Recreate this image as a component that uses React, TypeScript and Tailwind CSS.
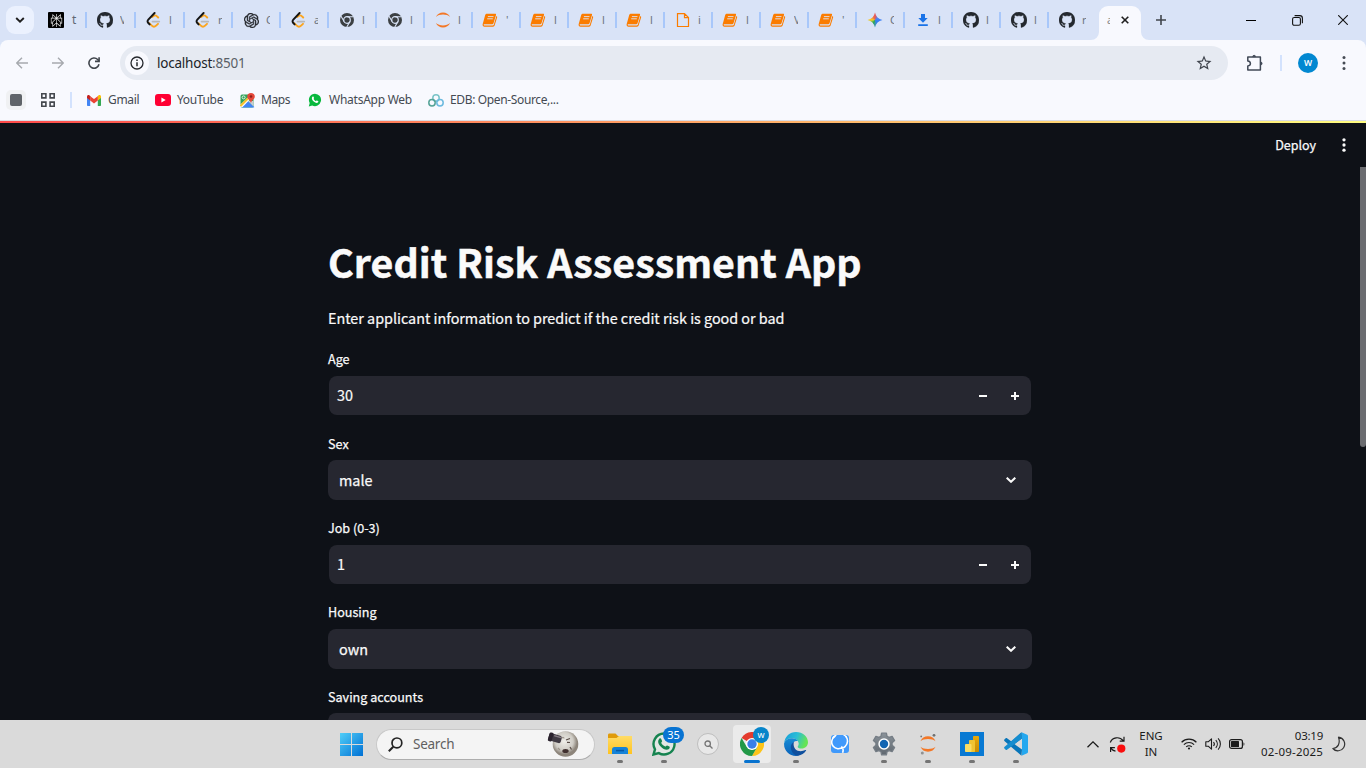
import React from "react";
import { SiOpenai, SiPerplexity } from "react-icons/si";
import { MdStarBorder } from "react-icons/md";

const ui = "font-['Noto_Sans','Open_Sans',sans-serif]";
const app = "font-['Noto_Sans_CJK_SC','Noto_Sans_CJK_JP',sans-serif]";

function GitHubMark() {
  return (
    <svg width="16" height="16" viewBox="0 0 16 16" fill="#24292f" stroke="#24292f" strokeWidth=".3">
      <path d="M8 0C3.58 0 0 3.58 0 8c0 3.54 2.29 6.53 5.47 7.59.4.07.55-.17.55-.38 0-.19-.01-.82-.01-1.49-2.01.37-2.53-.49-2.69-.94-.09-.23-.48-.94-.82-1.13-.28-.15-.68-.52-.01-.53.63-.01 1.08.58 1.23.82.72 1.21 1.87.87 2.33.66.07-.52.28-.87.51-1.07-1.78-.2-3.64-.89-3.64-3.95 0-.87.31-1.59.82-2.15-.08-.2-.36-1.02.08-2.12 0 0 .67-.21 2.2.82.64-.18 1.32-.27 2-.27.68 0 1.36.09 2 .27 1.53-1.04 2.2-.82 2.2-.82.44 1.1.16 1.92.08 2.12.51.56.82 1.27.82 2.15 0 3.07-1.87 3.75-3.65 3.95.29.25.54.73.54 1.48 0 1.07-.01 1.93-.01 2.2 0 .21.15.46.55.38A8.013 8.013 0 0016 8c0-4.42-3.58-8-8-8z" />
    </svg>
  );
}

function ChromeMono() {
  return (
    <svg width="16" height="16" viewBox="0 0 16 16" fill="none">
      <circle cx="8" cy="8" r="7" fill="#3c4043" />
      <circle cx="8" cy="8" r="3.3" stroke="#d9e3f7" strokeWidth="1.2" />
      <path d="M8 4.700h6.500M5.100 9.600 1.900 4M10.900 9.600 7.700 15.200" stroke="#d9e3f7" strokeWidth="1.1" />
    </svg>
  );
}

function LeetCode() {
  return (
    <svg width="16" height="16" viewBox="0 0 16 16" fill="none" strokeLinecap="round">
      <path d="M6.2 4.9 8 3.7c1-.6 2.1-.3 3 .6l1.2 1.2M3.5 11.3l2.3 2.4c1.2 1.2 3.1 1.2 4.3 0l1.9-1.9" stroke="#fba51f" strokeWidth="1.9" />
      <path d="M8.6 1 2.3 7.700c-.9 1-.9 2.300 0 3.300l1.300 1.400" stroke="#151515" strokeWidth="1.9" />
      <path d="M6.5 9.600h6.800" stroke="#b8b8b8" strokeWidth="1.7" />
    </svg>
  );
}

function Jupyter() {
  return (
    <svg width="16" height="16" viewBox="0 0 16 16" fill="#f37726">
      <path d="M.9 4.900C2.200 2.100 4.900.4 8 .4s5.800 1.700 7.100 4.500C13.300 3.300 10.800 2.500 8 2.500s-5.300.8-7.100 2.400z" />
      <path d="M.9 11.100C2.200 13.900 4.900 15.600 8 15.600s5.800-1.700 7.100-4.500C13.300 12.700 10.800 13.500 8 13.500s-5.300-.8-7.100-2.400z" />
    </svg>
  );
}

function Book() {
  return (
    <svg width="16" height="16" viewBox="0 0 16 16" className="-ml-[2px]">
      <path d="M5 1.800h8.200c.7 0 1 .5.8 1.100l-2.500 8.300c-.2.6-.7 1-1.400 1H2.600c-.8 0-1.100.4-.9.9.2.4.6.5 1.100.5h7.900c.5 0 .9-.3 1.100-.8L14.400 4c.7.3.9.8.7 1.400l-2.500 8.200c-.2.7-.8 1.100-1.500 1.100H2.500C1 14.700.2 13.300.7 12L3.200 3c.3-.8 1-1.200 1.800-1.200z" fill="#fb7c00" />
      <path d="M5.900 4.600h5.600M5.200 6.800h5.600" stroke="#dce5f8" strokeWidth=".9" />
    </svg>
  );
}

function FileIcon() {
  return (
    <svg width="16" height="16" viewBox="0 0 16 16" fill="none" stroke="#fb7c00" strokeWidth="1.2">
      <path d="M2.500 1.600h7l4 4v8.900h-11zM9.500 1.600v4h4" />
    </svg>
  );
}

function Gemini() {
  return (
    <span className="block size-4 bg-[conic-gradient(from_0deg,#ec5755,#4c85f4_55deg,#2f7df6_140deg,#3f91b8_175deg,#25a852_205deg,#71b84f_240deg,#f9cf2b_270deg,#ee7547_330deg,#ec5755)] [clip-path:path('M8_0.5C8.9_4.6_11.400_7.100_15.5_8C11.400_8.900_8.900_11.400_8_15.5C7.100_11.400_4.600_8.900_0.5_8C4.600_7.100_7.100_4.600_8_0.5Z')]" />
  );
}

function Download() {
  return (
    <svg width="16" height="16" viewBox="0 0 16 16" fill="#1a73e8">
      <path d="M6 2h4v4h2.700L8 10.800 3.300 6H6zM3.200 12.200h9.600V14H3.200z" />
    </svg>
  );
}

type Tab = { icon: string; text: string };
const tabs: Tab[] = [
  { icon: "perplexity", text: "t" },
  { icon: "github", text: "V" },
  { icon: "leet", text: "l" },
  { icon: "leet", text: "r" },
  { icon: "openai", text: "C" },
  { icon: "leet", text: "a" },
  { icon: "chrome", text: "l" },
  { icon: "chrome", text: "l" },
  { icon: "jupyter", text: "l" },
  { icon: "book", text: "'" },
  { icon: "book", text: "l" },
  { icon: "book", text: "l" },
  { icon: "book", text: "l" },
  { icon: "file", text: "i" },
  { icon: "book", text: "l" },
  { icon: "book", text: "V" },
  { icon: "book", text: "'" },
  { icon: "gemini", text: "C" },
  { icon: "download", text: "l" },
  { icon: "github", text: "l" },
  { icon: "github", text: "l" },
  { icon: "github", text: "r" },
];

function TabIcon({ name }: { name: string }) {
  switch (name) {
    case "perplexity":
      return <span className="grid size-4 place-items-center rounded-[1px] bg-black"><SiPerplexity size={13} color="#f3f3f3" /></span>;
    case "github":
      return <GitHubMark />;
    case "leet":
      return <LeetCode />;
    case "openai":
      return <SiOpenai size={15} color="#25282d" stroke="#25282d" strokeWidth={0.6} />;
    case "chrome":
      return <ChromeMono />;
    case "jupyter":
      return <Jupyter />;
    case "file":
      return <FileIcon />;
    case "gemini":
      return <Gemini />;
    case "download":
      return <Download />;
    default:
      return <Book />;
  }
}

function TabStrip() {
  return (
    <div className="flex h-10 bg-[#d9e3f7]">
      <div className="flex w-[36px] shrink-0 items-center pl-[6px]">
        <div className="grid h-7 w-7 shrink-0 place-items-center rounded-[9px] bg-[#ebf1fe]">
          <svg width="10" height="6" viewBox="0 0 10 6" fill="none" stroke="#1f1f1f" strokeWidth="1.9"><path d="M1.200 1 5 4.600 8.800 1" /></svg>
        </div>
      </div>
      {tabs.map((t, i) => (
        <div key={i} className={i < 3 ? "flex w-[49px] shrink-0 items-center" : "flex w-[48px] shrink-0 items-center"}>
          <span className={i === 0 ? "h-4 w-[2px]" : "h-4 w-[2px] bg-[#a8c7fa]"} />
          <span className="ml-[10px] grid size-4 place-items-center"><TabIcon name={t.icon} /></span>
          <span className={i === 0
            ? `${ui} ml-[8px] whitespace-nowrap text-[12px] leading-4 text-[#5f6774]`
            : `${ui} ml-[7px] w-[4px] overflow-hidden whitespace-nowrap text-[11px] leading-4 text-[#6b7380]`}>{t.text}</span>
        </div>
      ))}
      <div className="flex w-[70px] shrink-0 items-end">
        <svg width="8" height="8" viewBox="0 0 8 8" className="-ml-[4px] shrink-0"><path d="M8 0v8H0a8 8 0 0 0 8-8z" fill="#f8f9fe" /></svg>
        <div className="flex h-[34px] w-[42px] shrink-0 items-center rounded-t-[9px] bg-[#f8f9fe] pb-[6px] pl-[8px]">
          <span className={`${ui} w-[3px] overflow-hidden text-[11px] leading-4 text-[#888]`}>a</span>
          <svg width="8" height="8" viewBox="0 0 8 8" stroke="#1f1f1f" strokeWidth="1.6" className="ml-[11px]"><path d="m.7.7 6.600 6.600M7.300.7.7 7.300" /></svg>
        </div>
        <svg width="8" height="8" viewBox="0 0 8 8" className="shrink-0"><path d="M0 0v8h8a8 8 0 0 1-8-8z" fill="#f8f9fe" /></svg>
      </div>
      <div className="flex flex-1 items-center">
        <svg width="10" height="10" viewBox="0 0 10 10" stroke="#40454c" strokeWidth="1.6" className="-ml-[9px]"><path d="M5 0v10M0 5h10" /></svg>
        <div className="ml-auto flex items-center pr-[18px]">
          <span className="h-[1px] w-[10px] bg-black" />
          <svg width="11" height="11" viewBox="0 0 11 11" fill="none" stroke="#111" strokeWidth="1.1" className="ml-[36px]"><rect x=".6" y="2.5" width="7.8" height="7.8" rx="1.6" /><path d="M2.600.6h5.200c1.500 0 2.600 1.100 2.600 2.600v5" /></svg>
          <svg width="10" height="10" viewBox="0 0 10 10" stroke="#111" strokeWidth="1.1" className="ml-[35px]"><path d="m.2.2 9.600 9.600M9.800.2.2 9.800" /></svg>
        </div>
      </div>
    </div>
  );
}

function Arrow({ right = false }: { right?: boolean }) {
  return (
    <svg width="12" height="12" viewBox="0 0 12 12" fill="none" stroke="#a6a9ae" strokeWidth="1.4">
      <path d={right ? "M0 6h11M6 .7 11.300 6 6 11.300" : "M12 6H1M6 .7.7 6 6 11.300"} />
    </svg>
  );
}

function Toolbar() {
  return (
    <div className="bg-[#d9e3f7]">
      <div className="flex h-[46px] items-center rounded-t-[8px] bg-[#f8f9fe] pl-4">
        <Arrow />
        <span className="ml-6"><Arrow right /></span>
        <svg width="12" height="12" viewBox="0 0 12 12" fill="none" stroke="#40454c" strokeWidth="1.6" className="ml-6">
          <path d="M11 7.300A5.100 5.100 0 1 1 9.700 2.500L11 3.900" /><path d="M11.100.2v4.200H7" />
        </svg>
        <div className="ml-[20px] flex h-[34px] w-[1108px] items-center rounded-full bg-[#e6eaf2] pl-[5px]">
          <span className="grid size-6 place-items-center rounded-full bg-[#f8f9fe]">
            <svg width="14" height="14" viewBox="0 0 14 14" fill="none" stroke="#25282d" strokeWidth="1.3"><circle cx="7" cy="7" r="6" /><path d="M7 6.300v4M7 3.400v1.500" strokeWidth="1.5" /></svg>
          </span>
          <span className={`${ui} ml-2 text-[13.5px] leading-5 tracking-[-0.22px] text-[#202328]`}>localhost<span className="text-[#5a5f67]">:8501</span></span>
          <MdStarBorder size={18} color="#3f444d" className="ml-auto mr-[15px]" />
        </div>
        <svg width="18" height="18" viewBox="0 0 18 18" fill="none" stroke="#414957" strokeWidth="1.5" className="ml-[18px]">
          <path d="M1.800 3h12.600v12.900H1.800v-4c1.800-.2 2.600-1.200 2.600-2.400S3.600 7.200 1.800 7z" strokeLinejoin="round" /><path d="M6.700 2.700a1.400 1.400 0 0 1 2.800 0zM14.700 8.100a1.400 1.400 0 0 1 0 2.800z" fill="#414957" strokeWidth=".8" />
        </svg>
        <span className="ml-[16px] h-4 w-[2px] bg-[#d3e2fd]" />
        <span className={`${ui} ml-4 grid size-5 place-items-center rounded-full bg-[#0288d1] text-[8.5px] font-semibold leading-3 text-white`}>W</span>
        <svg width="4" height="14" viewBox="0 0 4 14" fill="#454b54" className="ml-6"><circle cx="2" cy="1.6" r="1.5" /><circle cx="2" cy="7" r="1.5" /><circle cx="2" cy="12.4" r="1.5" /></svg>
      </div>
    </div>
  );
}

function Bookmarks() {
  const label = `${ui} text-[12px] leading-4 text-[#444a52] whitespace-nowrap`;
  return (
    <div className="flex h-[34px] items-center bg-[#f8f9fe] pl-[6px] pb-[6px]">
      <span className="grid size-5 place-items-center rounded-[5px] bg-[#f0f1f3]"><span className="size-3 rounded-[2px] bg-[#5f6368]" /></span>
      <svg width="14" height="14" viewBox="0 0 14 14" fill="none" stroke="#44484e" strokeWidth="1.6" className="ml-[15px]"><path d="M.8.8h4.100v4.100H.8zM9.100.8h4.100v4.100H9.100zM.8 9.100h4.100v4.100H.8zM9.100 9.100h4.100v4.100H9.100z" /></svg>
      <span className="ml-[15px] h-4 w-[2px] bg-[#d3e2fd]" />
      <svg width="14" height="11" viewBox="0 0 14 11" className="ml-[15px]"><path d="M0 2v8.200c0 .5.3.8.8.8h2.400V4.900z" fill="#4285f4" /><path d="M10.800 11h2.400c.5 0 .8-.3.8-.8V2l-3.200 2.900z" fill="#34a853" /><path d="M10.800 1.200v4.300L14 3.100V1.700c0-1.400-1.500-2.100-2.600-1.200z" fill="#fbbc04" /><path d="M3.200 5.500V1.200L7 4.100l3.800-2.900v4.300L7 8.400z" fill="#ea4335" /><path d="M0 1.700v1.400l3.200 2.400V1.200L2.600.5C1.500-.4 0 .3 0 1.700z" fill="#c5221f" /></svg>
      <span className={`${label} ml-[7px] w-[47px] tracking-[-0.35px]`}>Gmail</span>
      <svg width="16" height="12" viewBox="0 0 16 12"><rect width="16" height="12" rx="3" fill="#ff0033" /><path d="M6.400 3.400v5.200L10.700 6z" fill="#fff" /></svg>
      <span className={`${label} ml-[6px] w-[63px] tracking-[-0.35px]`}>YouTube</span>
      <svg width="15" height="15" viewBox="0 0 15 15"><rect x=".5" y="1.5" width="13" height="13" rx="1.5" fill="#34a35a" /><path d="m1 13.500 6.500-6.200 6.800 6.600c-.2.4-.5.6-1 .6H2c-.5 0-.9-.4-1-1z" fill="#4285f4" /><path d="M0 12 10.500 2l2 2L2.300 14.300C1 14.800.2 13.400 0 12z" fill="#fff" /><path d="M.5 13 8 5.500" stroke="#fbc22a" strokeWidth="2" /><path d="m8 8 5.500 5.500V8z" fill="#c9cdd2" /><circle cx="3.600" cy="4.400" r="1.500" fill="none" stroke="#fff" strokeWidth=".8" /><path d="M11 0c2.300 0 3.800 1.500 3.800 3.500 0 2.700-3 3.300-3.800 6.500-.8-3.200-3.800-3.800-3.800-6.500C7.200 1.500 8.700 0 11 0z" fill="#e5483a" /><circle cx="11" cy="3.500" r="1.300" fill="#8e211b" /></svg>
      <span className={`${label} ml-[6px] w-[47px] tracking-[-0.45px]`}>Maps</span>
      <svg width="14" height="14" viewBox="0 0 14 14"><path d="M7 .7A6.200 6.200 0 0 0 1.700 10L.8 13.400l3.400-.9A6.200 6.200 0 1 0 7 .7z" fill="#08b83e" /><path d="M4.400 3.800c.5-.5 1-.4 1.200.1l.5 1.200c0 .3-.6.8-.5 1 .5 1 1.200 1.600 2.200 2.100.3 0 .7-.8 1-.7l1.300.6c.4.2.3 1-.2 1.400-1.200.9-3.300.1-4.700-1.400C3.800 6.700 3.400 5 4.400 3.800z" fill="#fff" /></svg>
      <span className={`${label} ml-[7px] w-[99px] tracking-[-0.25px]`}>WhatsApp Web</span>
      <svg width="16" height="13" viewBox="0 0 16 13" fill="none" strokeWidth="1.5"><circle cx="8" cy="4" r="3.2" stroke="#79c3c7" /><circle cx="4" cy="8.700" r="3.200" stroke="#55a397" /><circle cx="12" cy="8.700" r="3.200" stroke="#6cbadf" /></svg>
      <span className={`${label} ml-[6px] tracking-[-0.36px]`}>EDB: Open-Source,...</span>
    </div>
  );
}

type Field = { label: string; value: string; kind: "number" | "select"; row: string; head: string };
const fields: Field[] = [
  { label: "Age", value: "30", kind: "number", row: "h-[84px]", head: "" },
  { label: "Sex", value: "male", kind: "select", row: "h-[85px]", head: "pt-px" },
  { label: "Job (0-3)", value: "1", kind: "number", row: "h-[84px]", head: "" },
  { label: "Housing", value: "own", kind: "select", row: "h-[84px]", head: "" },
  { label: "Saving accounts", value: "", kind: "select", row: "h-[84px]", head: "pt-px" },
];

function FormField({ f }: { f: Field }) {
  return (
    <div className={`${f.row} shrink-0`}>
      <div className={`${f.head} flex h-[28px] items-start text-[12.6px] leading-[22px] [-webkit-text-stroke:0.25px_#fafafa]`}>{f.label}</div>
      {f.kind === "number" ? (
        <div className="mx-[1px] flex h-[39px] items-center rounded-[8px] bg-[#262730] pl-2">
          <span className="pb-px text-[14.4px] leading-6 [-webkit-text-stroke:0.2px_#fafafa]">{f.value}</span>
          <span className="ml-auto mr-[24px] h-[2px] w-[8px] bg-[#fafafa]" />
          <svg width="8" height="8" viewBox="0 0 8 8" stroke="#fafafa" strokeWidth="2" className="mr-[12px]"><path d="M4 0v8M0 4h8" /></svg>
        </div>
      ) : (
        <div className="flex h-10 items-center rounded-[8px] bg-[#262730] pl-[11px]">
          <span className="text-[14.4px] leading-6 [-webkit-text-stroke:0.25px_#fafafa]">{f.value}</span>
          <svg width="10" height="6" viewBox="0 0 10 6" fill="none" stroke="#fafafa" strokeWidth="2" className="ml-auto mr-[16px]"><path d="M.7.7 5 4.800 9.300.7" /></svg>
        </div>
      )}
    </div>
  );
}

function StreamlitPage() {
  return (
    <main className={`${app} flex h-[597px] overflow-hidden bg-[#0e1117] text-[#fafafa]`}>
      <div className="flex flex-1 flex-col">
        <header className="flex h-[44px] shrink-0 items-center justify-end pr-[14px]">
          <span className="text-[12.5px] leading-5 [-webkit-text-stroke:0.25px_#fafafa]">Deploy</span>
          <svg width="4" height="14" viewBox="0 0 4 14" fill="#fafafa" className="ml-[26px]"><circle cx="2" cy="1.8" r="1.65" /><circle cx="2" cy="7" r="1.65" /><circle cx="2" cy="12.2" r="1.65" /></svg>
        </header>
        <div className="ml-[328px] flex w-[704px] flex-col pt-[67px]">
          <h1 className="h-[54px] whitespace-nowrap text-[39.3px] font-bold leading-[54px] tracking-[0.04px] [-webkit-text-stroke:0.5px_#fafafa]">Credit Risk Assessment App</h1>
          <p className="mb-[20px] mt-[19px] h-[21px] whitespace-nowrap text-[14.4px] leading-[21px] tracking-[-0.03px] [-webkit-text-stroke:0.2px_#fafafa]">Enter applicant information to predict if the credit risk is good or bad</p>
          {fields.map((f) => <FormField key={f.label} f={f} />)}
        </div>
      </div>
      <div className="w-[6px] pt-[44px]"><div className="h-[280px] rounded-b-[3px] bg-[#6b6c70]" /></div>
    </main>
  );
}

function ExplorerIcon() {
  return (
    <svg width="24" height="24" viewBox="0 0 24 24"><defs><linearGradient id="fold" x2="0" y2="1"><stop stopColor="#ffdc67" /><stop offset="1" stopColor="#ffc31f" /></linearGradient></defs><path d="M0 3c0-1 .5-1.600 1.500-1.600h6L10 4h12.500c1 0 1.500.6 1.500 1.500V12H0z" fill="#e09b0b" /><path d="M0 6h8.500L11 4h13v18H0z" fill="url(#fold)" /><path d="M4 22v-4.500c0-1.600.9-2.500 2.500-2.500h11c1.600 0 2.500.9 2.500 2.500V22z" fill="#1683d8" /><path d="M8 18.600h8" stroke="#0658a6" strokeWidth="1.5" /></svg>
  );
}
function WhatsAppIcon() {
  return (
    <svg width="24" height="24" viewBox="0 0 24 24"><path d="M12 1.500A10.500 10.500 0 0 0 3 17.300L1.500 22.500l5.300-1.400A10.500 10.500 0 1 0 12 1.500z" fill="#e2e7e4" stroke="#15834f" strokeWidth="2.4" /><path d="M7.300 6.700c.7-.7 1.500-.6 1.900.2l.9 2.200c.2.6-1 1.500-.8 1.900.9 1.700 2 2.700 3.900 3.500.5.2 1.300-1.300 1.900-1.100l2.300 1.100c.6.4.4 1.700-.4 2.400-2.200 1.800-5.600.4-8.100-2.200-2.600-2.500-3.700-5.700-1.600-8z" fill="#15834f" /></svg>
  );
}
function ChromeColor() {
  return (
    <svg width="24" height="24" viewBox="0 0 24 24"><path d="M12 12 1.600 6A12 12 0 0 1 22.400 6H12z" fill="#e33b2e" /><path d="M12 12V6h10.400A12 12 0 0 1 12 24l5.200-9z" fill="#fcc419" /><path d="M1.600 6 6.800 15 12 18l5.200-3L12 24A12 12 0 0 1 1.600 6z" fill="#229847" /><circle cx="12" cy="12" r="6" fill="#fff" /><circle cx="12" cy="12" r="4.700" fill="#397fe8" /></svg>
  );
}
function EdgeIcon() {
  return (
    <svg width="24" height="24" viewBox="0 0 24 24"><defs><linearGradient id="ea" x2="1" y2=".3"><stop stopColor="#159bd9" /><stop offset=".55" stopColor="#29bdd7" /><stop offset="1" stopColor="#65e455" /></linearGradient><linearGradient id="eb" x2="0" y2="1"><stop stopColor="#168cd6" /><stop offset="1" stopColor="#0a61b8" /></linearGradient></defs><path d="M.2 11C.8 4.500 5.800 0 12 0c6.800 0 12 4.700 12 10.200 0 3.800-2.900 6.300-6.300 6.300-2.700 0-4-.9-4-1.800 0-.8 1-1.200 1-3 0-2.800-2.700-5.500-6.800-5.500C4.200 6.200 1.200 8 .2 11z" fill="url(#ea)" /><path d="M.1 11.200C1.300 8 4.300 6.200 7.900 6.200c2.800 0 5 1.200 6.100 2.900-3.200-.9-5.700 1.400-5.700 4.700 0 4.600 4 8.300 8.700 8.300-1.500 1.200-3.200 1.800-5 1.800C5 23.900-.5 18.300.1 11.200z" fill="url(#eb)" /><path d="M9.800 9.900c-2 1.100-3 3-3 5.400 0 4.100 3.400 8.500 7.300 8.400 3.300-.4 6.300-2.500 8-5.200.3-.5-.1-.8-.6-.5-6 3-13.200.1-11.700-8.100z" fill="#0f4f9d" /></svg>
  );
}
function SwirlIcon() {
  return (
    <svg width="18" height="18" viewBox="0 0 18 18" fill="none"><rect width="18" height="18" rx="3" fill="#4099fb" /><path d="M4.500.8C.5 3.500-.5 8 2.200 11.300c2.300 2.800 6.500 3.300 9.600.8M14.300.8c3 3.200 3 8-.3 10.800-1 .9-2 1.400-3.200 1.600M10.300 11.500c1.800 1.300 2.200 3.800 1.300 6.300" stroke="#fff" strokeWidth="1.6" /><path d="M1.500 2.800C2.600 1.300 4 .5 5.600 0M12.500 0c1.300.5 2.300 1.200 3.200 2.200" stroke="#fff" strokeWidth="1.1" /></svg>
  );
}
function GearIcon() {
  return (
    <svg width="24" height="24" viewBox="0 0 24 24"><defs><linearGradient id="gr" x2="0" y2="1"><stop stopColor="#8a9299" /><stop offset="1" stopColor="#606870" /></linearGradient></defs><path d="M9.600 1.200h4.800l.7 3.100 2 1.100 3-1.100 2.500 4.200-2.500 2.200v2.600l2.500 2.200-2.500 4.200-3-1.100-2 1.100-.7 3.100H9.600l-.7-3.100-2-1.100-3 1.100-2.500-4.200 2.500-2.200v-2.600L1.400 8.500l2.500-4.200 3 1.100 2-1.100z" fill="url(#gr)" stroke="#757d85" strokeWidth="1.3" strokeLinejoin="round" /><circle cx="12" cy="12" r="5.700" fill="#fff" /><circle cx="12" cy="12" r="4.200" fill="#1265b2" /></svg>
  );
}
function JupyterTask() {
  return (
    <svg width="18" height="22" viewBox="0 0 18 22"><path d="M1.500 8.200C2.800 5 5.500 3.300 9 3.300s6.200 1.700 7.500 4.900C14.900 6.700 12.100 6 9 6s-5.900.7-7.500 2.200zM1.500 13.800C2.800 17 5.500 18.700 9 18.700s6.200-1.700 7.500-4.900C14.900 15.300 12.100 16 9 16s-5.900-.7-7.500-2.200z" fill="#f37726" /><circle cx="15" cy="2.300" r="1.400" fill="#6f7070" /><circle cx="2.200" cy="3.400" r=".9" fill="#777" /><circle cx="3.300" cy="20" r="1.500" fill="#929292" /></svg>
  );
}
function PowerBI() {
  return (
    <svg width="24" height="24" viewBox="0 0 24 24"><defs><linearGradient id="pb" x2="0" y2="1"><stop stopColor="#e8a90b" /><stop offset="1" stopColor="#c58b06" /></linearGradient></defs><path d="M0 0h24v24H0z" fill="#0879d3" /><rect x="13" y="4" width="6" height="16" rx=".8" fill="url(#pb)" /><rect x="9" y="8" width="6" height="12" rx=".8" fill="#efc332" /><rect x="5" y="12" width="6.500" height="8" rx=".8" fill="#f9dc65" /></svg>
  );
}
function VsCode() {
  return (
    <svg width="24" height="24" viewBox="0 0 24 24"><path d="M17.500.2 7.400 9.500 3 6.200c-.4-.3-.9-.3-1.300 0L.4 7.500c-.4.4-.4 1 0 1.400L17.500 23.800l.5-6.200-7.600-5.600L18 6.500z" fill="#0875b9" /><path d="m7.400 14.500-4.400 3.300c-.4.3-.9.3-1.300 0L.4 16.500c-.4-.4-.4-1 0-1.400L17.500.2l.5 6.300z" fill="#168dcf" /><path d="m17.500.2 5.700 2.600c.5.3.8.7.8 1.300v15.800c0 .6-.3 1-.8 1.300l-5.700 2.600c.3-.2.5-.6.5-1V1.200c0-.5-.2-.9-.5-1z" fill="#25a8ef" /></svg>
  );
}

function TaskItem({ children, running = false, active = false }: { children: React.ReactNode; running?: boolean; active?: boolean }) {
  return (
    <div className="flex h-12 w-11 items-center justify-center">
      <div className={active ? "relative grid h-[38px] w-[38px] place-items-center rounded-[4px] bg-[#ebebeb]" : "relative grid h-[38px] w-[38px] place-items-center"}>
        {children}
        {active && <span className="absolute bottom-0 left-[11px] h-[3px] w-4 rounded-full bg-[#0873cf]" />}
        {running && <span className="absolute bottom-0 left-[16px] h-[3px] w-[6px] rounded-full bg-[#747474]" />}
      </div>
    </div>
  );
}

function Moon() {
  return (
    <svg width="32" height="28" viewBox="0 0 32 28"><defs><radialGradient id="mn" cx=".45" cy=".4"><stop stopColor="#efeee9" /><stop offset=".7" stopColor="#cfccc5" /><stop offset="1" stopColor="#8d857b" /></radialGradient></defs><circle cx="18.500" cy="14" r="12.800" fill="url(#mn)" /><g transform="rotate(16 8 10)"><rect x="1" y="4.500" width="13" height="7.500" rx="2" fill="#403a43" /><rect x="1" y="3.800" width="4" height="9" rx="1.300" fill="#2a222d" /><path d="M6 6h7" stroke="#8a8088" strokeWidth="1.3" /></g><path d="m19 10 4-1.500M20 12.300l3 .2M23 17l1.500 2.500" stroke="#594d48" strokeWidth="1.2" /><ellipse cx="18.500" cy="21" rx="3.200" ry="2" fill="#40302f" /><path d="M15 8c1-1 2-.5 2 .5M11 18l2 2" stroke="#9c948b" strokeWidth="1.2" fill="none" /></svg>
  );
}

function Taskbar() {
  return (
    <div className={`${ui} flex h-12 items-center bg-[#dadada] text-[#1b1b1b]`}>
      <svg width="23" height="23" viewBox="0 0 23 23" className="ml-[340px]"><defs><linearGradient id="win" gradientUnits="userSpaceOnUse" x2="23" y2="23"><stop stopColor="#50cef8" /><stop offset="1" stopColor="#0070d4" /></linearGradient></defs><path d="M0 0h11v11H0zM12 0h11v11H12zM0 12h11v11H0zM12 12h11v11H12z" fill="url(#win)" /></svg>
      <div className="ml-[13px] flex h-[31px] w-[219px] items-center rounded-full border border-[#c8c8c8] border-b-[#adadad] bg-[#f4f4f4] pl-[11px]">
        <svg width="15" height="15" viewBox="0 0 15 15" fill="none" stroke="#242424" strokeWidth="1.7"><circle cx="8.900" cy="5.900" r="4.900" /><path d="M5.300 9.700.8 14.200" strokeWidth="2" /></svg>
        <span className="ml-[10px] text-[13.5px] leading-5 tracking-[-0.25px] text-[#606060]">Search</span>
        <span className="ml-auto mr-[15px]"><Moon /></span>
      </div>
      <div className="ml-[3px] flex">
        <TaskItem running><ExplorerIcon /></TaskItem>
        <TaskItem running>
          <WhatsAppIcon />
          <span className="absolute left-[18px] top-[2px] grid h-4 w-[21px] place-items-center rounded-full bg-[#0873d2] text-[11px] leading-4 text-white">35</span>
        </TaskItem>
        <TaskItem>
          <span className="grid size-[22px] place-items-center rounded-full border border-[#bebebe] bg-[#e8e8e8]"><svg width="9" height="9" viewBox="0 0 9 9" fill="none" stroke="#767676" strokeWidth="1.3"><circle cx="3.700" cy="3.700" r="2.700" /><path d="m5.700 5.700 2.800 2.800" /></svg></span>
        </TaskItem>
        <TaskItem active>
          <ChromeColor />
          <span className="absolute left-[20px] top-[2px] grid size-4 place-items-center rounded-full bg-[#0785ca] text-[9px] leading-3 text-white">w</span>
        </TaskItem>
        <TaskItem running><EdgeIcon /></TaskItem>
        <TaskItem><SwirlIcon /></TaskItem>
        <TaskItem running><GearIcon /></TaskItem>
        <TaskItem running><JupyterTask /></TaskItem>
        <TaskItem running><PowerBI /></TaskItem>
        <TaskItem running><VsCode /></TaskItem>
      </div>
      <div className="ml-auto flex items-center pr-[20px]">
        <svg width="12" height="7" viewBox="0 0 12 7" fill="none" stroke="#1b1b1b" strokeWidth="1.3"><path d="M.5 6.300 6 .9l5.500 5.400" /></svg>
        <svg width="17" height="17" viewBox="0 0 17 17" fill="none" stroke="#1b1b1b" strokeWidth="1.2" className="ml-[10px]"><path d="M1.300 6.500C3.300 1 10.500.2 14.200 4.700M15 .8v4.300h-4.300M1.600 16v-4.300h4.300M1.800 12.200c1.100 1.600 2.700 2.700 4.700 3" /><circle cx="12.300" cy="12.600" r="4.100" fill="#fa0d0d" stroke="none" /></svg>
        <span className="ml-[10px] w-[30px] text-center text-[11.5px] leading-4">ENG<br />IN</span>
        <svg width="16" height="12" viewBox="0 0 16 12" fill="none" stroke="#1b1b1b" strokeWidth="1.2" className="ml-[15px]"><path d="M.6 4.200a10.500 10.500 0 0 1 14.800 0M2.900 6.600a7.200 7.200 0 0 1 10.200 0M5.200 8.900a4 4 0 0 1 5.600 0" /><circle cx="8" cy="10.500" r="1.100" fill="#1b1b1b" stroke="none" /></svg>
        <svg width="17" height="14" viewBox="0 0 17 14" fill="none" stroke="#1b1b1b" strokeWidth="1.1" className="ml-[8px]"><path d="M.8 4.800v4.400h2.400l3.300 3V1.800l-3.300 3zM8.500 5a3 3 0 0 1 0 4M10.800 3.200a5.600 5.600 0 0 1 0 7.600M13.100 1.400a8 8 0 0 1 0 11.200" strokeLinejoin="round" /></svg>
        <svg width="16" height="10" viewBox="0 0 16 10" className="ml-[7px]"><rect x=".6" y=".6" width="12.800" height="8.800" rx="2" fill="none" stroke="#1b1b1b" strokeWidth="1.2" /><rect x="2" y="2" width="8" height="6" rx=".6" fill="#1b1b1b" /><path d="M14.500 3.200c1.200.5 1.200 3.100 0 3.600z" fill="#1b1b1b" /></svg>
        <span className="ml-[11px] w-[67px] whitespace-nowrap text-right text-[11.5px] leading-4"><span className="tracking-[-0.25px]">03:19</span><br /><span className="tracking-[0.2px]">02-09-2025</span></span>
        <svg width="14" height="16" viewBox="0 0 14 16" fill="none" stroke="#333" strokeWidth="1.2" className="ml-[9px]"><path d="M6.500 1.200c5.100.7 7.800 6.200 5.100 10.500-2.300 3.700-7.800 4.200-10.700.8 4.900-.5 7.700-4.800 5.600-11.300z" strokeLinejoin="round" /></svg>
      </div>
    </div>
  );
}

export default function App() {
  return (
    <div className="flex h-[768px] w-[1366px] flex-col overflow-hidden">
      <TabStrip />
      <Toolbar />
      <Bookmarks />
      <div className="h-[1px] bg-[#d9dce4]" />
      <div className="h-[2px] bg-[linear-gradient(90deg,#ff4b4b,#fffd80)]" />
      <StreamlitPage />
      <Taskbar />
    </div>
  );
}
